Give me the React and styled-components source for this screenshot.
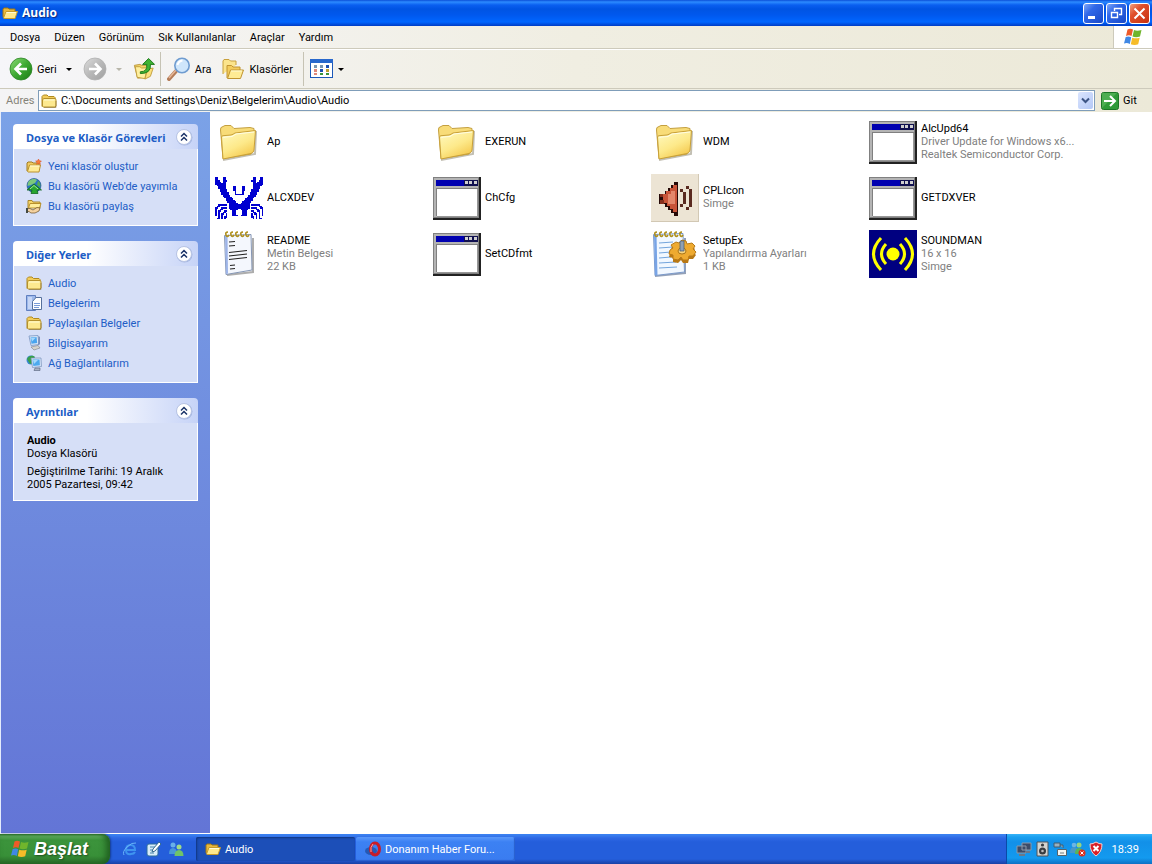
import React, { useState } from 'react';
import styled, { createGlobalStyle } from 'styled-components';

const GlobalStyle = createGlobalStyle`
  * {
    box-sizing: border-box;
  }
  body {
    margin: 0;
    font-family: Roboto, "Open Sans", sans-serif;
    font-size: 11px;
    line-height: 13px;
    color: #000;
  }
  button, input {
    font: inherit;
    color: inherit;
    border: 0;
    padding: 0;
    background: none;
  }
  svg {
    display: block;
    flex: none;
  }
`;

const Desktop = styled.div`
  display: flex;
  flex-direction: column;
  min-height: 100vh;
  background: #fff;
`;

const TitleBar = styled.header`
  display: flex;
  align-items: center;
  gap: 4px;
  height: 26px;
  padding: 0 2px;
  background: linear-gradient(#0b4fd8 0, #2c8bff 2px, #0a5ff0 5px, #0054e3 9px, #0058ee 15px, #0066ff 22px, #003cc4 26px);
`;

const Title = styled.h1`
  flex: 1;
  margin: 0;
  font-family: "Open Sans", "Noto Sans", sans-serif;
  font-size: 12px;
  line-height: 18px;
  color: #fff;
  text-shadow: 1px 1px 1px #0a2a80;
`;

const WindowButtons = styled.div`
  display: flex;
  gap: 2px;
`;

const WindowButton = styled.button`
  display: grid;
  place-items: center;
  width: 21px;
  height: 21px;
  border: 1px solid #fff;
  border-radius: 3px;
  background: ${props => props.$danger
    ? 'linear-gradient(135deg, #f0a080 0, #e0502c 35%, #c83010 100%)'
    : 'linear-gradient(135deg, #7fa8f8 0, #3068e8 35%, #1848c8 100%)'};
`;

const MenuBar = styled.nav`
  display: flex;
  height: 23px;
  background: linear-gradient(90deg, #f6f6f9, #f0eee2 50%, #ece9d8);
  border-bottom: 1px solid #cdcabb;
`;

const MenuItem = styled.button`
  height: 22px;
  padding: 0 7px;

  &:first-child {
    margin-left: 3px;
  }
`;

const Flag = styled.div`
  display: grid;
  place-items: center;
  width: 39px;
  margin-left: auto;
  background: #fff;
  border-left: 1px solid #cdcabb;
`;

const ToolBar = styled.div`
  display: flex;
  align-items: center;
  height: 40px;
  padding-left: 9px;
  background: linear-gradient(90deg, #f6f6f9, #f0eee2 50%, #ece9d8);
  border-top: 1px solid #fff;
  border-bottom: 1px solid #cdcabb;
`;

const ToolButton = styled.button`
  display: flex;
  align-items: center;
  gap: 4px;
  height: 30px;
  padding: 0 ${props => props.$pad || 0}px;
`;

const Separator = styled.div`
  width: 1px;
  height: 34px;
  margin: 0 6px 0 ${props => (props.$tight ? 0 : 5)}px;
  background: #c6c3b4;
`;

const Caret = styled.span`
  margin-left: ${props => (props.$near ? 0 : 5)}px;
  border: 3px solid transparent;
  border-top-color: ${props => (props.$off ? '#b8b6aa' : '#000')};
  border-bottom: 0;
`;

const AddressBar = styled.form`
  display: flex;
  align-items: center;
  height: 23px;
  background: linear-gradient(90deg, #f4f4f5, #f0eee2 50%, #ece9d8);
`;

const AddressLabel = styled.label`
  width: 38px;
  padding-left: 6px;
  color: #858378;
`;

const AddressField = styled.div`
  display: flex;
  flex: 1;
  align-items: center;
  gap: 4px;
  height: 21px;
  padding: 0 1px 0 2px;
  border: 1px solid #7f9db9;
  background: #fff;
`;

const AddressInput = styled.input`
  flex: 1;
  min-width: 0;
  outline: 0;
`;

const DropButton = styled.button`
  display: grid;
  place-items: center;
  width: 15px;
  height: 17px;
  border-radius: 2px;
  background: linear-gradient(135deg, #dbe5fe, #b4c8f6);
`;

const GoButton = styled.button`
  display: flex;
  align-items: center;
  gap: 4px;
  width: 57px;
  padding-left: 6px;
`;

const Content = styled.div`
  display: flex;
  flex: 1;
`;

const SidePane = styled.aside`
  display: flex;
  flex: none;
  flex-direction: column;
  gap: 15px;
  width: 210px;
  padding: 12px;
  border-left: 1px solid #e4ecfc;
  border-bottom: 1px solid #fff;
  background: linear-gradient(#7ba2e7, #6375d6);
`;

const Panel = styled.section`
  width: 185px;
`;

const PanelHeader = styled.div`
  display: flex;
  align-items: center;
  justify-content: space-between;
  height: 25px;
  padding: 0 5px 0 13px;
  border-radius: 4px 4px 0 0;
  background: linear-gradient(90deg, #fff 0, #fff 40%, #c6d3f7 100%);
`;

const PanelTitle = styled.h2`
  margin: 2px 0 0;
  font-family: "Noto Sans", "Open Sans", sans-serif;
  font-size: 11px;
  line-height: 13px;
  color: #215dc6;
  white-space: nowrap;
`;

const PanelBody = styled.div`
  padding: ${props => (props.$text ? '11px 12px 9px 13px' : '7px 12px 9px')};
  border: 1px solid #fff;
  border-top: 0;
  background: #d6dff7;
`;

const TaskLink = styled.a`
  display: flex;
  align-items: center;
  gap: 6px;
  height: 20px;
  color: #215dc6;
  text-decoration: none;
  white-space: nowrap;
`;

const Detail = styled.p`
  margin: 0 0 ${props => props.$gap || 0}px;
`;

const Files = styled.main`
  display: grid;
  flex: 1;
  grid-template-columns: repeat(auto-fill, 218px);
  grid-auto-rows: 56px;
  align-content: start;
  padding: 2px 0 0 5px;
`;

const Tile = styled.div`
  display: flex;
  align-items: center;
  gap: 4px;
`;

const TileText = styled.div`
  display: flex;
  flex-direction: column;
  width: 164px;
  padding-bottom: 2px;
`;

const TileLine = styled.span`
  overflow: hidden;
  white-space: nowrap;
  text-overflow: ellipsis;
  color: ${props => (props.$muted ? '#808080' : '#000')};
`;

const TaskBar = styled.footer`
  display: flex;
  height: 30px;
  color: #fff;
  background: linear-gradient(#3a80f0 0, #3a80f0 1px, #2e68e4 4px, #245edb 8px, #245edb 25px, #1941a5 30px);
`;

const StartButton = styled.button`
  display: flex;
  align-items: center;
  gap: 4px;
  width: 110px;
  padding-left: 10px;
  border-radius: 0 8px 8px 0;
  font: italic bold 18px/24px "Liberation Sans", Arial, sans-serif;
  color: #fff;
  text-shadow: 1px 1px 2px #1c4a1c;
  background: linear-gradient(#2f7a30 0, #66b466 2px, #3c943c 6px, #389038 22px, #2a6c2a 30px);
  box-shadow: inset -4px 0 6px #206020, 1px 0 2px #163c90;
`;

const QuickLaunch = styled.div`
  display: flex;
  align-items: center;
  gap: 7px;
  width: 86px;
  padding-left: 12px;
`;

const QuickButton = styled.button`
  width: 16px;
  height: 16px;
`;

const TaskButton = styled.button`
  display: flex;
  align-items: center;
  gap: 4px;
  width: 159px;
  height: 24px;
  margin: 3px 1px 0 0;
  padding-left: 9px;
  border-radius: 2px;
  background: ${props => (props.$active ? '#1c4fb8' : 'linear-gradient(#5a98fa, #3c81f3 5px, #3a7cf0)')};
  box-shadow: ${props => (props.$active ? 'inset 1px 1px 2px #10357f' : 'inset -1px -1px 1px #2a60cc')};
`;

const Tray = styled.div`
  display: flex;
  align-items: center;
  gap: 2px;
  margin-left: auto;
  padding: 0 13px 0 9px;
  border-left: 1px solid #0a4aa8;
  background: linear-gradient(#38b4f8 0, #1aa0f0 3px, #1290e8 8px, #139aef 24px, #0d70c4 30px);
`;

const Clock = styled.time`
  margin-left: 6px;
`;

function Svg({ size = 16, box = size, children, ...rest }) {
  return (
    <svg width={size} height={size} viewBox={`0 0 ${box} ${box}`} aria-hidden="true" {...rest}>
      {children}
    </svg>
  );
}

function SmallFolder() {
  return (
    <Svg>
      <path d="M1 13.500V3.500L2.500 2H6l1.500 1.500H13l1 1V6" fill="#f3cd5c" stroke="#b08a20" />
      <path d="M1.500 13.500V6.500L3 5.500H14.500L15 7V13L14 14H2z" fill="#fde98f" stroke="#b5912c" />
      <path d="M3 7h10.500" stroke="#fffbd8" />
      <path d="M3 14.500h12V8" fill="none" stroke="#8a7030" opacity=".6" />
    </Svg>
  );
}

function OpenFolder() {
  return (
    <Svg>
      <path d="M1 12V4l1-1h4l1 1h6v3" fill="#e9b93c" stroke="#9a7418" />
      <path d="M1.500 13L4 6.500h11.500L13 13.500H2z" fill="#ffe98c" stroke="#c79b2a" />
      <path d="M4.500 7.500H14" stroke="#fffbd8" />
    </Svg>
  );
}

function NewFolder() {
  return (
    <Svg>
      <path d="M1 13V5l1-1h4l1 1h6v3" fill="#f3cd62" stroke="#a07a20" />
      <path d="M1.500 13.500L3.500 7h11L13 14H2z" fill="#ffeb96" stroke="#b8902c" />
      <path d="M4 8h9.500" stroke="#fffbd8" />
      <path d="M12.500 1l.9 1.800 2 .2-1.400 1.400.4 2-1.900-1-1.800 1 .3-2L9.600 3l2-.2z" fill="#f8803c" stroke="#d84a20" strokeWidth=".5" />
    </Svg>
  );
}

function ShareFolder() {
  return (
    <Svg>
      <path d="M2 10V2.500h4l1 1.500h7v6" fill="#f6d468" stroke="#a8852a" />
      <path d="M2.500 10l1.500-4.500h11L13.500 10z" fill="#ffed9c" stroke="#b8902c" />
      <path d="M1 10.500h3l3 1.500 4-2.500 3 .5-1 3-4 2H5l-2-1.500H1z" fill="#f5d2a0" stroke="#6b4f20" strokeWidth=".7" />
      <path d="M0 10h2v5H0z" fill="#454a42" />
    </Svg>
  );
}

function Globe() {
  return (
    <Svg>
      <circle cx="8" cy="7.500" r="7" fill="#2a72c8" stroke="#1d4d80" strokeWidth=".6" />
      <path d="M3 3c3-3 7-2 8-1L9 5 5 7 1.500 8c0-2 .5-4 1.500-5z" fill="#7cc87c" />
      <path d="M12 3c2 1 3 4 2 6l-3-2z" fill="#55ac4d" />
      <path d="M8 6l7.500 6H11l1 3.500H5L6 12H1z" fill="#27a530" stroke="#116820" strokeWidth=".8" />
      <path d="M4 11l4-3.500L12 11" fill="none" stroke="#a0e494" />
    </Svg>
  );
}

function MyDocuments() {
  return (
    <Svg>
      <path d="M.5.500h9v15h-9z" fill="#9db8ea" stroke="#5f7fc0" />
      <path d="M2 2h4v12H2z" fill="#c6d6f6" />
      <path d="M6.500 6.500L10 2.500h5.500v12h-9z" fill="#fff" stroke="#56709c" />
      <path d="M8 8.500h6M8 10.500h6M8 12.500h5" stroke="#7a9cd8" />
    </Svg>
  );
}

function Computer() {
  return (
    <Svg>
      <path d="M3 1l9-.5 1 9-8 1z" fill="#d8e6f8" stroke="#8ba4cc" />
      <path d="M4.500 2.500l6-.4.700 6-5.700.7z" fill="#48a4ee" />
      <path d="M5 3l5-.4-4 4z" fill="#a5d8fb" />
      <path d="M12.500 1l1.500 1v7l-2 1.500" fill="#7b90bb" />
      <path d="M5 12l7-1.500 2 2.500-6 2z" fill="#d5d3cc" stroke="#7c7f88" strokeWidth=".6" />
    </Svg>
  );
}

function Network() {
  return (
    <Svg>
      <circle cx="5" cy="5" r="4.500" fill="#3686d0" />
      <path d="M1 4c2-4 6-4 8-2L6 5l1 3-3 1z" fill="#38a04a" />
      <path d="M5 3h10l.5 8.500-9 1z" fill="#d3e2f8" stroke="#7890b8" strokeWidth=".7" />
      <path d="M6.500 4.500h7l.4 5.700-6.600.7z" fill="#4ca9ee" />
      <path d="M7 5h5l-4 4z" fill="#a5d8fb" />
      <path d="M9 13h5v2.500H8z" fill="#a9b2c4" stroke="#53607a" strokeWidth=".6" />
    </Svg>
  );
}

function BigFolder() {
  return (
    <Svg size={48}>
      <defs>
        <linearGradient id="folder" x1="0" y1="0" x2=".6" y2="1">
          <stop offset="0" stopColor="#fffbc4" />
          <stop offset=".6" stopColor="#fde98a" />
          <stop offset="1" stopColor="#f5ca50" />
        </linearGradient>
      </defs>
      <path d="M8 42L40 36 41 13" fill="none" stroke="#9a9480" strokeWidth="2" opacity=".6" />
      <path d="M5.500 12Q5 9 8 8.500L10 7.500H16L19 10.500 35 9.500 39 10.500V14L36 36 8 40.500z" fill="#f8dc78" stroke="#c4a040" />
      <path d="M6.500 19Q6.500 18 8 17.700L16 17Q18 16.500 20 15L40.500 12.500 39 32Q38.500 35 36 35.500L8 41z" fill="url(#folder)" stroke="#c8a038" />
      <path d="M8 20Q8 19 17 18.500L21 16 39 14" fill="none" stroke="#fffde4" />
    </Svg>
  );
}

function ExeWindow() {
  return (
    <Svg size={48} shapeRendering="crispEdges">
      <path d="M0 3H48V46H0z" fill="#222" />
      <path d="M0 3H46V44H0z" fill="#808080" />
      <path d="M1 4H45V43H1z" fill="#b4b4b4" />
      <path d="M3 6H45V12H3z" fill="#0000b0" />
      <path d="M31 6H45V12H31z" fill="#101050" />
      <path d="M32 7h3v3h-3zM36 7h3v3h-3zM41 7h3v3h-3z" fill="#d0d0d0" />
      <path d="M3 14H45V42H3z" fill="#808080" />
      <path d="M4 15H44V42H4z" fill="#fff" />
      <path d="M44 15V42H4" fill="none" stroke="#989898" />
    </Svg>
  );
}

// left half of the crab, the right half is mirrored
const CRAB = [
  '##...##.........',
  '##...##.........',
  '###..###........',
  '####.##.........',
  '#######.........',
  '.######.........',
  '..#####.....##..',
  '..#####.....##..',
  '...#####....##..',
  '...#####.....#..',
  '....#####....#..',
  '....#####....###',
  '.....#####......',
  '......#####.....',
  '.......#####....',
  '.......######...',
  '........######..',
  '.........######.',
  '..######.#######',
  '.##......#######',
  '##..####.#######',
  '#..##.....#####.',
  '#.##..##...###..',
  '#.#..##....###..',
  '#.#.##.#...###..',
  '#.#.#..#...####.',
  '..#.#.##........',
  '.##.#.#.........',
];

function Crab() {
  return (
    <Svg size={48} box={32} shapeRendering="crispEdges">
      {CRAB.map((row, y) =>
        (row + [...row].reverse().join('')).split('').map((cell, x) =>
          cell === '#' ? <rect key={`${x}-${y}`} x={x} y={y + 2} width="1" height="1" fill="#0000d0" /> : null
        )
      )}
    </Svg>
  );
}

function Rings({ x, count, width = 5 }) {
  return (
    <>
      {Array.from({ length: count }, (_, i) => (
        <path key={i} d={`M${x + i * width} 2q-3 0-2 3t3 0`} fill="none" stroke="#b0901c" strokeWidth="1.600" />
      ))}
    </>
  );
}

function TextFile() {
  return (
    <Svg size={48}>
      <path d="M12 45L38 42 38 8" fill="none" stroke="#777" strokeWidth="2" opacity=".6" />
      <path d="M9.500 5.500L36 4.500 37 40 11 44.500z" fill="#f4f7fd" stroke="#8596b4" />
      <path d="M10 6L12.500 6 13 43.500 11 44z" fill="#9db4e8" />
      <path d="M14 12l6-.5M14 16l6-.5M14 22.500l18-2M14 26l18-2M14 29.500l18-2M15 35.500l5-.5M15 39l5-.5" stroke="#222" strokeWidth="1.200" />
      <Rings x={13} count={5} />
    </Svg>
  );
}

function SetupFile() {
  return (
    <Svg size={48}>
      <path d="M4 46L34 43 34 8" fill="none" stroke="#657898" strokeWidth="2" opacity=".7" />
      <path d="M2.500 4.500L32 3.500 33.500 42 4 45.500z" fill="#f2f8ff" stroke="#7b9acb" />
      <path d="M3 5h2.500L6.500 45 4 45z" fill="#78a4e6" />
      <path d="M8 13l14-1M8 18l14-1M8 23l12-1M8 28l12-1M8 33l17-1M8 38l18-1" stroke="#74a5dc" strokeWidth="1.200" />
      <Rings x={6} count={6} />
      <path d="M20 18l5-3 3 1 3-3 4 1 1 3 5-1 3 3-2 3 3 3-3 4-4 0-1 4-5 0-2-3-3 3-5-1 0-4-4-1 1-4 3-2z" fill="#b87814" />
      <path d="M20 15l5-3 3 1 3-3 4 1 1 3 5-1 3 3-2 3 3 3-3 4-4 0-1 4-5 0-2-3-3 3-5-1 0-4-4-1 1-4 3-2z" fill="#eeaa30" stroke="#b87a18" />
      <ellipse cx="31" cy="21" rx="4" ry="3" fill="#f8d580" stroke="#a87418" />
      <path d="M29 11h4v10h-4z" fill="#8fa0b4" stroke="#526274" strokeWidth=".8" />
    </Svg>
  );
}

function SpeakerIcon() {
  return (
    <Svg size={48} shapeRendering="crispEdges">
      <path d="M0 0H48V48H0z" fill="#ece4d4" />
      <path d="M47 0V47H0" fill="none" stroke="#d2c8b4" />
      <path d="M8 20h6v-3h3v-3h3v-3h3V8h4v34h-4v-3h-3v-3h-3v-3h-3v-3H8z" fill="#260a08" />
      <path d="M12 20h3v-3h4v-3h3v-3h4v27h-4v-3h-3v-3h-3v-3h-4z" fill="#c85438" />
      <path d="M17 20h3v-3h4v13h-7z" fill="#e4876a" />
      <path d="M9 20h3v3h-3zM9 26h4v4h-4z" fill="#86301e" />
      <path d="M29 15h3v3h-3zM32 18h3v12h-3zM29 30h3v3h-3zM35 12h3v3h-3zM38 15h3v18h-3zM35 33h3v3h-3z" fill="#5a2a20" />
    </Svg>
  );
}

function SoundMan() {
  return (
    <Svg size={48}>
      <path d="M0 0H48V48H0z" fill="#000080" />
      <circle cx="24" cy="24" r="6.500" fill="#ffff00" />
      <path d="M17 14Q8 24 17 34M31 14Q40 24 31 34M12 8Q-3 24 12 40M36 8Q51 24 36 40" fill="none" stroke="#ffff00" strokeWidth="3" />
    </Svg>
  );
}

function WindowsFlag({ size = 20 }) {
  return (
    <Svg size={size} box={20}>
      <path d="M4.500 2.500Q7 .8 10 2.500L8.500 9Q6 7.500 3 9z" fill="#ee5a28" />
      <path d="M11 3Q14 4.500 18.500 3L17 9.500Q13 11 9.500 9.500z" fill="#70b52c" />
      <path d="M2.700 10Q5.500 8.700 8.200 10.200L6.800 17Q4 15.200 1 16.500z" fill="#4088e4" />
      <path d="M9.200 10.700Q13 12 16.700 10.700L15.200 17.300Q11.500 18.800 7.800 17.300z" fill="#f6bc28" />
    </Svg>
  );
}

function RoundArrow({ off }) {
  return (
    <Svg size={24}>
      <defs>
        <linearGradient id={off ? 'gray' : 'green'} x1="0" y1="0" x2="1" y2="1">
          <stop offset="0" stopColor={off ? '#dcdcdc' : '#8edc78'} />
          <stop offset=".5" stopColor={off ? '#b8b8b8' : '#3eaa32'} />
          <stop offset="1" stopColor={off ? '#a0a0a0' : '#1a7a14'} />
        </linearGradient>
      </defs>
      <circle cx="12" cy="12" r="11" fill={off ? 'url(#gray)' : 'url(#green)'} stroke={off ? '#b0b0b0' : '#2c8424'} strokeWidth=".8" />
      <path
        d={off ? 'M6 12H17M12 6.500L17.500 12 12 17.500' : 'M18 12H7M12 6.500L6.500 12 12 17.500'}
        fill="none"
        stroke="#fff"
        strokeWidth="2.600"
      />
    </Svg>
  );
}

function UpFolder() {
  return (
    <Svg size={22} box={24}>
      <path d="M1.500 8l6-1 2 1h8l-2 13L5 22z" fill="#f5d668" stroke="#b8943a" />
      <path d="M2.500 9.500h5l2 1.500 6-.5-2.500 12L4.500 21z" fill="#fff0a0" stroke="#c09c3c" />
      <path d="M13 23l3-11 6-1-3 9z" fill="#fbe07c" stroke="#c09c3c" />
      <path d="M8 15q8 0 7-8h-4.500l6.500-6.500L23.500 7H19q1 10-11 10z" fill="#3fb334" stroke="#187416" />
    </Svg>
  );
}

function Magnifier() {
  return (
    <Svg size={24}>
      <path d="M2 22l8-9" stroke="#b47c58" strokeWidth="4" strokeLinecap="round" />
      <path d="M2 21l7-8" stroke="#e6b898" strokeWidth="1.500" />
      <circle cx="15" cy="8.500" r="7.200" fill="#cfe6fb" stroke="#6f9cd0" strokeWidth="1.600" />
      <path d="M10.500 8q1-4 5-4.500" fill="none" stroke="#fff" strokeWidth="2" />
    </Svg>
  );
}

function Folders() {
  return (
    <Svg size={24}>
      <path d="M2 17V4l1-1.500h5L9.500 4H15v4" fill="#fbe48c" stroke="#c8a03c" />
      <path d="M6 21V8.500h4.500L12 10h7v3" fill="#f3cc5c" stroke="#c09430" />
      <path d="M6.500 21.500L9.500 13H22.500L19.500 21.500z" fill="#ffeb94" stroke="#c09430" />
      <path d="M10 14h11" stroke="#fffcd8" />
    </Svg>
  );
}

function Views() {
  return (
    <Svg size={24} shapeRendering="crispEdges">
      <path d="M.5 2.500h22v18H.5z" fill="#fff" stroke="#1c58b8" />
      <path d="M0 2h23v4H0z" fill="#2868cc" />
      <path d="M4 8h3v3H4zM10 8h3v3h-3z" fill="#7a96b0" />
      <path d="M16 8h3v3h-3zM10 12h3v3h-3z" fill="#1c50b0" />
      <path d="M4 12h3v3H4zM4 16h3v2H4z" fill="#e08878" />
      <path d="M16 12h3v3h-3z" fill="#c09c30" />
      <path d="M10 16h3v2h-3zM16 16h3v2h-3z" fill="#3a9438" />
    </Svg>
  );
}

function Chevrons() {
  return (
    <Svg size={18}>
      <circle cx="9.500" cy="9.500" r="8" fill="#8da4d4" opacity=".6" />
      <circle cx="9" cy="9" r="7.500" fill="#fff" stroke="#b8c4e4" />
      <path d="M6 8.500l3-3 3 3M6 12.500l3-3 3 3" fill="none" stroke="#1c3468" strokeWidth="1.500" />
    </Svg>
  );
}

const tasks = [
  { text: 'Yeni klasör oluştur', icon: <NewFolder /> },
  { text: "Bu klasörü Web'de yayımla", icon: <Globe /> },
  { text: 'Bu klasörü paylaş', icon: <ShareFolder /> },
];

const places = [
  { text: 'Audio', icon: <SmallFolder /> },
  { text: 'Belgelerim', icon: <MyDocuments /> },
  { text: 'Paylaşılan Belgeler', icon: <SmallFolder /> },
  { text: 'Bilgisayarım', icon: <Computer /> },
  { text: 'Ağ Bağlantılarım', icon: <Network /> },
];

const files = [
  { name: 'Ap', icon: <BigFolder /> },
  { name: 'EXERUN', icon: <BigFolder /> },
  { name: 'WDM', icon: <BigFolder /> },
  { name: 'AlcUpd64', info: ['Driver Update for Windows x6...', 'Realtek Semiconductor Corp.'], icon: <ExeWindow /> },
  { name: 'ALCXDEV', icon: <Crab /> },
  { name: 'ChCfg', icon: <ExeWindow /> },
  { name: 'CPLIcon', info: ['Simge'], icon: <SpeakerIcon /> },
  { name: 'GETDXVER', icon: <ExeWindow /> },
  { name: 'README', info: ['Metin Belgesi', '22 KB'], icon: <TextFile /> },
  { name: 'SetCDfmt', icon: <ExeWindow /> },
  { name: 'SetupEx', info: ['Yapılandırma Ayarları', '1 KB'], icon: <SetupFile /> },
  { name: 'SOUNDMAN', info: ['16 x 16', 'Simge'], icon: <SoundMan /> },
];

const menus = ['Dosya', 'Düzen', 'Görünüm', 'Sık Kullanılanlar', 'Araçlar', 'Yardım'];

function SidePanel({ title, text, children }) {
  const [open, setOpen] = useState(true);

  return (
    <Panel>
      <PanelHeader>
        <PanelTitle>{title}</PanelTitle>
        <button type="button" aria-label={title} aria-expanded={open} onClick={() => setOpen(!open)}>
          <Chevrons />
        </button>
      </PanelHeader>
      {open && <PanelBody $text={text}>{children}</PanelBody>}
    </Panel>
  );
}

function App() {
  const [path, setPath] = useState('C:\\Documents and Settings\\Deniz\\Belgelerim\\Audio\\Audio');

  return (
    <>
      <GlobalStyle />
      <Desktop>
        <TitleBar>
          <OpenFolder />
          <Title>Audio</Title>
          <WindowButtons>
            <WindowButton aria-label="Simge Durumuna Küçült">
              <Svg size={19}><path d="M4 12h7v3H4z" fill="#fff" /></Svg>
            </WindowButton>
            <WindowButton aria-label="Önceki Boyut">
              <Svg size={19}>
                <path d="M7.500 7V4.500h7v6H12M7 4.500h8M4.500 8.500h6v5h-6zM4 8.500h7" fill="none" stroke="#fff" strokeWidth="1.400" />
              </Svg>
            </WindowButton>
            <WindowButton $danger aria-label="Kapat">
              <Svg size={19}><path d="M4.500 4.500l10 10M14.500 4.500l-10 10" stroke="#fff" strokeWidth="2" /></Svg>
            </WindowButton>
          </WindowButtons>
        </TitleBar>

        <MenuBar>
          {menus.map(menu => <MenuItem key={menu}>{menu}</MenuItem>)}
          <Flag><WindowsFlag /></Flag>
        </MenuBar>

        <ToolBar>
          <ToolButton><RoundArrow />Geri<Caret /></ToolButton>
          <ToolButton $pad={11} disabled aria-label="İleri"><RoundArrow off /><Caret $off /></ToolButton>
          <ToolButton aria-label="Yukarı"><UpFolder /></ToolButton>
          <Separator />
          <ToolButton><Magnifier />Ara</ToolButton>
          <ToolButton $pad={10}><Folders />Klasörler</ToolButton>
          <Separator $tight />
          <ToolButton aria-label="Görünümler"><Views /><Caret $near /></ToolButton>
        </ToolBar>

        <AddressBar onSubmit={e => e.preventDefault()}>
          <AddressLabel htmlFor="address">Adres</AddressLabel>
          <AddressField>
            <SmallFolder />
            <AddressInput id="address" value={path} onChange={e => setPath(e.target.value)} />
            <DropButton type="button" aria-label="Adres listesi">
              <Svg size={9}><path d="M1 2.500l3.500 3.500L8 2.500" fill="none" stroke="#3c5484" strokeWidth="2" /></Svg>
            </DropButton>
          </AddressField>
          <GoButton>
            <Svg size={18}>
              <rect x=".5" y=".5" width="17" height="17" rx="2" fill="#2f9a38" stroke="#1c7626" />
              <path d="M1 1h15L1 16z" fill="#62bd62" opacity=".6" />
              <path d="M3 9h10M9 4l5 5-5 5" fill="none" stroke="#fff" strokeWidth="2" />
            </Svg>
            Git
          </GoButton>
        </AddressBar>

        <Content>
          <SidePane>
            <SidePanel title="Dosya ve Klasör Görevleri">
              {tasks.map(task => <TaskLink href="#" key={task.text}>{task.icon}{task.text}</TaskLink>)}
            </SidePanel>
            <SidePanel title="Diğer Yerler">
              {places.map(place => <TaskLink href="#" key={place.text}>{place.icon}{place.text}</TaskLink>)}
            </SidePanel>
            <SidePanel title="Ayrıntılar" text>
              <Detail><b>Audio</b></Detail>
              <Detail $gap={5}>Dosya Klasörü</Detail>
              <Detail>Değiştirilme Tarihi: 19 Aralık 2005 Pazartesi, 09:42</Detail>
            </SidePanel>
          </SidePane>

          <Files>
            {files.map(file => (
              <Tile key={file.name}>
                {file.icon}
                <TileText>
                  <TileLine>{file.name}</TileLine>
                  {file.info && file.info.map(line => <TileLine $muted key={line}>{line}</TileLine>)}
                </TileText>
              </Tile>
            ))}
          </Files>
        </Content>

        <TaskBar>
          <StartButton><WindowsFlag />Başlat</StartButton>
          <QuickLaunch>
            <QuickButton aria-label="Internet Explorer">
              <Svg>
                <path d="M3.500 9H13Q13 4 8.500 4T4 9t5 4q3 0 4-2" fill="none" stroke="#3f94f0" strokeWidth="2" />
                <path d="M2 14Q0 11 5 6t9-4" fill="none" stroke="#6ab4f8" />
              </Svg>
            </QuickButton>
            <QuickButton aria-label="Masaüstünü Göster">
              <Svg>
                <rect x="2" y="3" width="11" height="12" rx="2" fill="#d8ecf8" stroke="#2c6c9c" />
                <path d="M5 6h5M5 9h5M5 12h4" stroke="#4484ac" />
                <path d="M7 11l1-3 6-7 2 2-6 7z" fill="#fff" stroke="#386c90" />
              </Svg>
            </QuickButton>
            <QuickButton aria-label="Messenger">
              <Svg>
                <circle cx="5" cy="4" r="2.500" fill="#68b0e8" />
                <path d="M1 13q0-6 4-6t4 6z" fill="#4898d8" />
                <circle cx="11" cy="6" r="2.500" fill="#a0dc88" />
                <path d="M6.500 15q0-6 4.500-6t4.500 6z" fill="#70c468" />
              </Svg>
            </QuickButton>
          </QuickLaunch>
          <TaskButton $active><OpenFolder />Audio</TaskButton>
          <TaskButton>
            <Svg>
              <ellipse cx="6" cy="10" rx="6" ry="4" fill="#18408c" opacity=".6" />
              <ellipse cx="10" cy="8" rx="4.500" ry="6" fill="none" stroke="#c81c28" strokeWidth="3" />
              <path d="M8 3q-3 3-2 8" fill="none" stroke="#f8a0a0" />
            </Svg>
            Donanım Haber Foru...
          </TaskButton>
          <Tray>
            <Svg>
              <path d="M6 2h9v7H6zM1 5h9v7H1z" fill="#3c4c68" stroke="#8c98a8" />
              <path d="M3 14h6M10 11h4" stroke="#6c7888" strokeWidth="2" />
            </Svg>
            <Svg>
              <path d="M3 1h11v14H3z" fill="#d4d4d0" stroke="#505458" />
              <circle cx="8.500" cy="10" r="3.500" fill="#383c40" />
              <circle cx="8.500" cy="10" r="1.300" fill="#bbb" />
              <circle cx="8.500" cy="4" r="1.600" fill="#383c40" />
            </Svg>
            <Svg>
              <path d="M2 2h6v4H2zM8 4h3v3" fill="#9cb0bc" stroke="#405c70" />
              <path d="M5.500 8.500h9v6h-9z" fill="#f4f4f0" stroke="#54646c" />
              <path d="M8 12h4" stroke="#707c80" />
            </Svg>
            <Svg>
              <circle cx="4" cy="4" r="2.300" fill="#6cb4e4" />
              <path d="M0 12q0-6 4-6t4 6z" fill="#4898c8" />
              <circle cx="9" cy="4" r="2.500" fill="#98d480" />
              <path d="M5 13q0-6 4-6t4 6z" fill="#58b458" />
              <circle cx="12" cy="12" r="3.500" fill="#d83020" />
              <path d="M10.500 10.500l3 3M13.500 10.500l-3 3" stroke="#fff" />
            </Svg>
            <Svg>
              <path d="M8 1q3 2 6 2 0 8-6 12-6-4-6-12 3 0 6-2z" fill="#d82028" stroke="#f4d0d0" />
              <path d="M5.500 5l5 5M10.500 5l-5 5" stroke="#fff" strokeWidth="2" />
            </Svg>
            <Clock>18:39</Clock>
          </Tray>
        </TaskBar>
      </Desktop>
    </>
  );
}

export default App;
